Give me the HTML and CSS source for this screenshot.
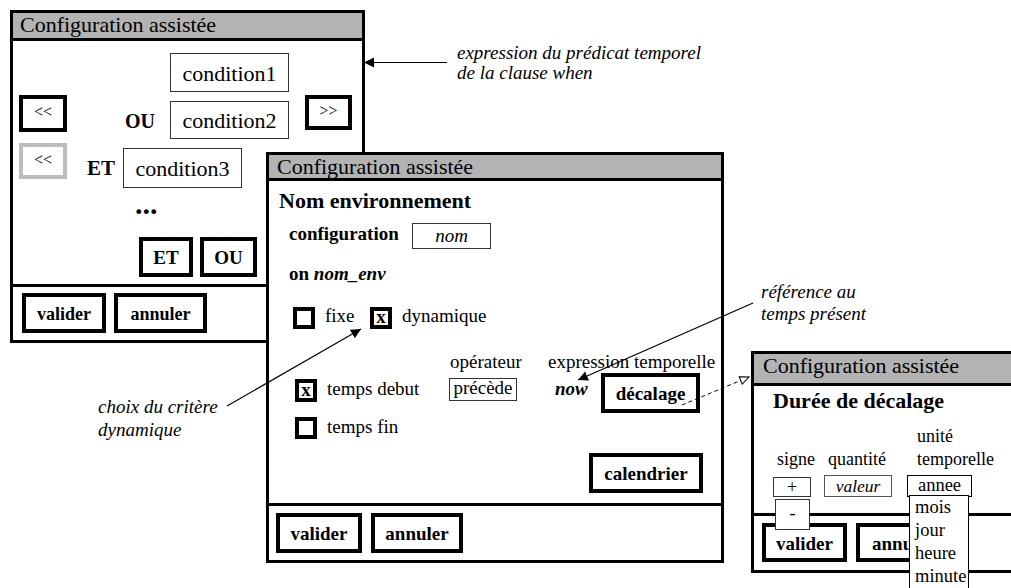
FILE: index.html
```html
<!DOCTYPE html>
<html lang="fr">
<head>
<meta charset="utf-8">
<title>Configuration assistée</title>
<link rel="stylesheet" href="styles.css">
</head>
<body>
<div class="desk">

  <section class="win win-cond">
    <header class="title">Configuration assistée</header>
    <div class="body cond-body">
      <div class="row"><div class="field cond c1">condition1</div></div>
      <div class="row row-c2">
        <div class="btn btn-arrow">&lt;&lt;</div>
        <span class="op op-ou">OU</span>
        <div class="field cond c2">condition2</div>
        <div class="btn btn-arrow btn-right">&gt;&gt;</div>
      </div>
      <div class="row row-c3">
        <div class="btn btn-arrow btn-disabled">&lt;&lt;</div>
        <span class="op op-et">ET</span>
        <div class="field cond c3">condition3</div>
      </div>
      <div class="dots">...</div>
      <div class="row row-ops">
        <div class="btn btn-op">ET</div>
        <div class="btn btn-op btn-ou">OU</div>
      </div>
    </div>
    <footer class="foot foot1">
      <div class="btn btn-foot w-val1">valider</div>
      <div class="btn btn-foot w-ann1">annuler</div>
    </footer>
  </section>

  <section class="win win-env">
    <header class="title title-short">Configuration assistée</header>
    <div class="body env-body">
      <div class="heading h-env">Nom environnement</div>
      <div class="row cfg-row">
        <span class="lbl-bold cfg-lbl">configuration</span>
        <div class="field nom-field">nom</div>
      </div>
      <div class="lbl-bold on-row">on <em>nom_env</em></div>
      <div class="row check-row">
        <span class="check"></span>
        <span class="check-lbl w-fixe">fixe</span>
        <span class="check">x</span>
        <span class="check-lbl">dynamique</span>
      </div>
      <div class="row ops-labels">
        <span class="w-oper">opérateur</span>
        <span>expression temporelle</span>
      </div>
      <div class="row temps-row">
        <span class="check check-t">x</span>
        <span class="check-lbl t-lbl w-debut">temps debut</span>
        <div class="field prec-field">précède</div>
        <span class="now">now</span>
        <div class="btn btn-dec">décalage</div>
      </div>
      <div class="row fin-row">
        <span class="check check-t check-fin"></span>
        <span class="check-lbl t-lbl">temps fin</span>
      </div>
      <div class="row cal-row">
        <div class="btn btn-cal">calendrier</div>
      </div>
    </div>
    <footer class="foot foot2">
      <div class="btn btn-foot w-val2">valider</div>
      <div class="btn btn-foot w-ann2">annuler</div>
    </footer>
  </section>

  <section class="win win-dur">
    <header class="title title-tall">Configuration assistée</header>
    <div class="body dur-body">
      <div class="heading h-dur">Durée de décalage</div>
      <div class="row dur-labels">
        <span class="w-signe">signe</span>
        <span class="w-quant">quantité</span>
        <span class="unit-lbl">unité<br>temporelle</span>
      </div>
      <div class="row dur-controls">
        <div class="sign-wrap">
          <div class="field sign-field">+</div>
          <div class="field sign-pop">-</div>
        </div>
        <div class="field val-field">valeur</div>
        <div class="unit-wrap">
          <div class="field unit-field">annee</div>
          <ul class="unit-list">
            <li>mois</li>
            <li>jour</li>
            <li>heure</li>
            <li>minute</li>
          </ul>
        </div>
      </div>
    </div>
    <footer class="foot foot3">
      <div class="btn btn-foot w-val3">valider</div>
      <div class="btn btn-foot w-ann2 w-ann3">annuler</div>
    </footer>
  </section>

  <div class="note note-when">expression du prédicat temporel<br>de la clause when</div>
  <div class="note note-ref">référence au<br>temps présent</div>
  <div class="note note-choix">choix du critère<br>dynamique</div>

  <svg class="arrows" width="1011" height="588" viewBox="0 0 1011 588">
    <defs>
      <marker id="head" markerUnits="userSpaceOnUse" markerWidth="11" markerHeight="11" refX="10" refY="5" orient="auto">
        <path d="M0,0 L10,5 L0,10 z" fill="#000"/>
      </marker>
      <marker id="open" markerUnits="userSpaceOnUse" markerWidth="12" markerHeight="12" refX="10" refY="5" orient="auto">
        <path d="M1,1 L10,5 L1,9 z" fill="#fff" stroke="#000" stroke-width="1"/>
      </marker>
    </defs>
    <line x1="447" y1="62.5" x2="364" y2="62.5" stroke="#000" stroke-width="1.2" marker-end="url(#head)"/>
    <line x1="227" y1="406" x2="361" y2="329" stroke="#000" stroke-width="1.2" marker-end="url(#head)"/>
    <line x1="753" y1="303" x2="578" y2="380" stroke="#000" stroke-width="1.2" marker-end="url(#head)"/>
    <line x1="682" y1="405" x2="749" y2="377" stroke="#000" stroke-width="1" stroke-dasharray="4 3" marker-end="url(#open)"/>
  </svg>
</div>
</body>
</html>
```

FILE: styles.css
```css
html, body {
  margin: 0;
  padding: 0;
  background: #fff;
}

body {
  font-family: "Liberation Serif", Tinos, "Times New Roman", Times, "DejaVu Serif", serif;
  color: #000;
}

.desk {
  position: relative;
  width: 1011px;
  height: 588px;
  overflow: hidden;
  background: #fff;
}

/* ---------- windows ---------- */
.win {
  position: absolute;
  box-sizing: border-box;
  border: 3px solid #000;
  background: #fff;
  display: flex;
  flex-direction: column;
}

.win-cond { left: 10px; top: 10px; width: 355px; height: 333px; }
.win-env  { left: 266px; top: 152px; width: 458px; height: 411px; }
.win-dur  { left: 751px; top: 351px; width: 300px; height: 222px; }

.title {
  flex: none;
  height: 25px;
  overflow: hidden;
  background: #b3b3b3;
  border-bottom: 3px solid #000;
  font-size: 22px;
  line-height: 24px;
  padding-left: 7px;
  white-space: nowrap;
}
.title-short { height: 23px; padding-left: 8px; }
.title-tall  { height: 29px; padding-left: 9px; }

.body {
  flex: 1;
  display: flex;
  flex-direction: column;
  align-items: flex-start;
  min-height: 0;
}

.foot {
  flex: none;
  box-sizing: border-box;
  border-top: 3px solid #000;
  display: flex;
  align-items: flex-start;
}
.foot1 { height: 56px; padding: 6px 0 0 9px; gap: 8px; }
.foot2 { height: 57px; padding: 7px 0 0 7px; gap: 9px; }
.foot3 { height: 57px; padding: 7px 0 0 8px; gap: 9px; }

.row {
  display: flex;
  align-items: flex-start;
}

/* ---------- controls ---------- */
.btn {
  box-sizing: border-box;
  border: 4px solid #000;
  background: #fff;
  display: flex;
  align-items: center;
  justify-content: center;
  font-weight: bold;
  white-space: nowrap;
}

.btn-foot {
  height: 40px;
  font-size: 18px;
  padding-top: 2px;
}
.w-val1 { width: 84px; }
.w-ann1 { width: 93px; }
.w-val2 { width: 86px; font-size: 19px; }
.w-ann2 { width: 92px; font-size: 19px; }
.w-val3 { width: 85px; height: 39px; font-size: 19px; }
.w-ann3 { height: 39px; justify-content: flex-start; padding-left: 12px; }

.field {
  box-sizing: border-box;
  border: 1px solid #333;
  background: #fff;
  white-space: nowrap;
  text-align: center;
}

/* ---------- window 1 ---------- */
.cond-body { padding-top: 12px; }

.cond {
  width: 119px;
  font-size: 22px;
  display: flex;
  align-items: center;
  justify-content: center;
  padding-top: 2px;
}
.c1 { margin-left: 157px; height: 39px; }
.c2 { margin-top: 6px; height: 38px; }
.c3 { margin-top: 5px; height: 40px; }

.row-c2 { margin-top: 3px; }
.row-c3 { margin-top: 4px; }

.btn-arrow {
  width: 48px;
  height: 37px;
  margin-left: 6px;
  font-weight: normal;
  font-size: 16px;
  padding-bottom: 3px;
}
.btn-right { margin-left: 16px; width: 47px; height: 35px; }
.btn-disabled { border-color: #bdbdbd; height: 36px; }

.op {
  font-weight: bold;
  white-space: nowrap;
}
.op-ou { margin-left: 58px; width: 45px; margin-top: 16px; font-size: 20px; line-height: 20px; }
.op-et { margin-left: 20px; width: 36px; margin-top: 15px; font-size: 21px; line-height: 21px; }

.dots {
  margin: 1px 0 0 122px;
  font-weight: bold;
  font-size: 30px;
  line-height: 30px;
}

.row-ops { margin-top: 18px; }
.btn-op { width: 54px; height: 40px; margin-left: 126px; font-size: 19px; padding-top: 2px; }
.btn-ou { margin-left: 7px; width: 57px; }

/* ---------- window 2 ---------- */
.heading {
  font-weight: bold;
  font-size: 22px;
  line-height: 24px;
  white-space: nowrap;
}
.h-env { margin: 8px 0 0 10px; }

.lbl-bold {
  font-weight: bold;
  font-size: 19px;
  line-height: 20px;
  white-space: nowrap;
}
.cfg-row { margin-top: 10px; }
.cfg-lbl { margin: 1px 0 0 20px; width: 123px; }
.nom-field {
  width: 79px;
  height: 26px;
  font-style: italic;
  font-size: 19px;
  line-height: 24px;
}

.on-row { margin: 15px 0 0 20px; }

.check {
  box-sizing: border-box;
  width: 22px;
  height: 22px;
  border: 4px solid #000;
  display: flex;
  align-items: center;
  justify-content: center;
  font-weight: bold;
  font-size: 19px;
  line-height: 14px;
  padding-bottom: 2px;
  flex: none;
}
.check-lbl {
  margin-left: 10px;
  font-size: 19px;
  line-height: 18px;
  white-space: nowrap;
}
.w-fixe { width: 45px; margin-left: 10px; }

.check-row { margin: 23px 0 0 24px; }

.ops-labels {
  margin: 23px 0 0 181px;
  font-size: 19px;
  line-height: 20px;
  white-space: nowrap;
}
.w-oper { width: 98px; }

.temps-row { margin-top: 1px; }
.check-t { margin: 6px 0 0 26px; height: 23px; }
.t-lbl { margin-top: 7px; }
.w-debut { width: 122px; }

.prec-field {
  margin-top: 5px;
  width: 68px;
  height: 23px;
  font-size: 19px;
  line-height: 17px;
}

.now {
  margin: 6px 0 0 38px;
  width: 46px;
  font-weight: bold;
  font-style: italic;
  font-size: 19px;
  line-height: 20px;
}

.btn-dec { width: 99px; height: 40px; font-size: 19px; padding-top: 2px; }

.fin-row { margin-top: 4px; }
.check-fin { margin-top: 0; height: 22px; }
.fin-row .t-lbl { margin-top: 1px; }

.cal-row { margin: 14px 0 0 320px; }
.btn-cal { width: 114px; height: 40px; font-size: 19px; padding-top: 2px; }

/* ---------- window 3 ---------- */
.h-dur { margin: 3px 0 0 19px; }

.dur-labels {
  margin: 12px 0 0 23px;
  align-items: flex-end;
  font-size: 18px;
  line-height: 23px;
  white-space: nowrap;
}
.w-signe { width: 51px; }
.w-quant { width: 89px; }

.dur-controls { margin-top: 4px; }

.sign-wrap {
  position: relative;
  margin: 2px 0 0 19px;
}
.sign-field {
  width: 38px;
  height: 20px;
  font-size: 18px;
  line-height: 18px;
}
.sign-pop {
  position: absolute;
  left: 2px;
  top: 22px;
  width: 35px;
  height: 31px;
  font-size: 18px;
  line-height: 26px;
  z-index: 3;
}

.val-field {
  margin-left: 13px;
  width: 68px;
  height: 22px;
  font-style: italic;
  font-size: 17.5px;
  line-height: 20px;
  border-color: #555;
}

.unit-wrap {
  position: relative;
  margin-left: 15px;
}
.unit-field {
  width: 65px;
  height: 22px;
  font-size: 18.5px;
  line-height: 19px;
  border: 1.5px solid #000;
}
.unit-list {
  position: absolute;
  left: 2px;
  top: 20px;
  width: 60px;
  margin: 0;
  padding: 0 0 0 5px;
  list-style: none;
  box-sizing: border-box;
  border: 1px solid #000;
  background: #fff;
  font-size: 18.5px;
  line-height: 23px;
  z-index: 3;
}

/* ---------- annotations ---------- */
.note {
  position: absolute;
  font-style: italic;
  font-size: 19px;
  white-space: nowrap;
  z-index: 5;
}
.note-when  { left: 457px; top: 43px; line-height: 20px; }
.note-ref   { left: 761px; top: 281px; line-height: 22px; }
.note-choix { left: 98px;  top: 395px; line-height: 23px; }

.arrows {
  position: absolute;
  left: 0;
  top: 0;
  z-index: 6;
  pointer-events: none;
}
```
